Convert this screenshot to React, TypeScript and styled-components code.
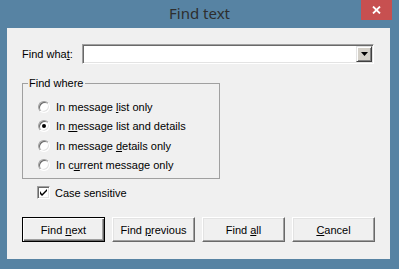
import React from "react";
import styled, { createGlobalStyle } from "styled-components";

const GlobalStyle = createGlobalStyle`
  html, body {
    margin: 0;
    padding: 0;
    background: #5783a3;
  }
  body {
    font-family: "Liberation Sans", Arial, sans-serif;
    font-size: 11px;
    color: #000;
  }
`;

const Window = styled.div`
  width: 399px;
  height: 269px;
  display: flex;
  flex-direction: column;
  background: #5783a3;
`;

const TitleBar = styled.div`
  height: 28px;
  display: grid;
  grid-template-columns: 1fr auto 1fr;
`;

const Title = styled.div`
  grid-column: 2;
  font-family: "Noto Sans", "Open Sans", sans-serif;
  font-size: 15px;
  line-height: 27px;
  color: #2e2e2e;
`;

const CloseButton = styled.div`
  grid-column: 3;
  justify-self: end;
  width: 31px;
  height: 20px;
  margin-right: 7px;
  background: #c75050;
  display: flex;
  align-items: center;
  justify-content: center;
`;

const Client = styled.div`
  flex: 1;
  margin: 0 9px 10px 7px;
  background: #f0f0f0;
  padding: 16px 16px 0 15px;
  display: flex;
  flex-direction: column;
`;

const FindRow = styled.div`
  display: flex;
  align-items: center;
  height: 20px;
`;

const Label = styled.span`
  width: 60px;
`;

const Key = styled.u`
  text-decoration: underline;
  text-underline-offset: 1px;
`;

const ComboBox = styled.div`
  flex: 1;
  height: 20px;
  box-sizing: border-box;
  background: #fff;
  border-style: solid;
  border-width: 1px;
  border-color: #a0a0a0 #fff #fff #a0a0a0;
  box-shadow: inset 1px 1px #696969, inset -1px -1px #e3e3e3;
  display: flex;
  justify-content: flex-end;
  padding: 1px;
`;

const DropButton = styled.div`
  width: 16px;
  box-sizing: border-box;
  background: #d4d0c8;
  border-style: solid;
  border-width: 1px;
  border-color: #e3e3e3 #404040 #404040 #e3e3e3;
  box-shadow: inset 1px 1px #fff, inset -1px -1px #808080;
  display: flex;
  align-items: center;
  justify-content: center;
`;

const GroupBox = styled.fieldset`
  width: 198px;
  box-sizing: border-box;
  margin: 12px 0 0 0;
  padding: 7px 0 3px 0;
  border: 1px solid #a0a0a0;
  min-width: 0;
`;

const Legend = styled.legend`
  margin-left: 5px;
  padding: 0 2px 0 1px;
  line-height: 14px;
`;

const OptionList = styled.div`
  padding-left: 15px;
`;

const OptionRow = styled.label`
  display: flex;
  align-items: center;
  gap: 6px;
  height: 19.5px;
`;

const Radio = styled.span<{ $checked?: boolean }>`
  position: relative;
  width: 12px;
  height: 12px;
  box-sizing: border-box;
  border-radius: 50%;
  background: #fff;
  border: 1px solid;
  border-color: #a0a0a0 #fff #fff #a0a0a0;
  box-shadow: inset 1px 1px #696969, inset -1px -1px #e3e3e3;
  &::after {
    content: "";
    display: ${(p) => (p.$checked ? "block" : "none")};
    position: absolute;
    left: 3px;
    top: 3px;
    width: 4px;
    height: 4px;
    border-radius: 50%;
    background: #000;
  }
`;

const CheckRow = styled.label`
  display: flex;
  align-items: center;
  gap: 5px;
  height: 19px;
  margin: 4px 0 0 15px;
`;

const CheckBox = styled.span`
  width: 13px;
  height: 13px;
  box-sizing: border-box;
  background: #fff;
  border: 1px solid;
  border-color: #a0a0a0 #fff #fff #a0a0a0;
  box-shadow: inset 1px 1px #696969, inset -1px -1px #e3e3e3;
  display: flex;
  align-items: center;
  justify-content: center;
`;

const ButtonRow = styled.div`
  display: flex;
  justify-content: space-between;
  margin-top: 15px;
  width: 353px;
`;

const Button = styled.div<{ $default?: boolean }>`
  width: 83px;
  height: 25px;
  box-sizing: border-box;
  background: #f0f0f0;
  display: flex;
  align-items: center;
  justify-content: center;
  border: 1px solid;
  border-color: ${(p) => (p.$default ? "#000" : "#fff #696969 #696969 #fff")};
  box-shadow: ${(p) =>
    p.$default
      ? "inset 1px 1px #fff, inset -1px -1px #696969, inset -2px -2px #a0a0a0"
      : "inset -1px -1px #a0a0a0, inset 1px 1px #e3e3e3"};
`;

const options = [
  { pre: "In message ", key: "l", post: "ist only", checked: false },
  { pre: "In ", key: "m", post: "essage list and details", checked: true },
  { pre: "In message ", key: "d", post: "etails only", checked: false },
  { pre: "In c", key: "u", post: "rrent message only", checked: false },
];

const buttons = [
  { pre: "Find ", key: "n", post: "ext", def: true },
  { pre: "Find ", key: "p", post: "revious", def: false },
  { pre: "Find ", key: "a", post: "ll", def: false },
  { pre: "", key: "C", post: "ancel", def: false },
];

export default function App() {
  return (
    <>
      <GlobalStyle />
      <Window>
        <TitleBar>
          <Title>Find text</Title>
          <CloseButton>
            <svg width="9" height="8" viewBox="0 0 9 8">
              <path d="M1 0.5 L8 7.5 M8 0.5 L1 7.5" stroke="#fff" strokeWidth="1.8" />
            </svg>
          </CloseButton>
        </TitleBar>
        <Client>
          <FindRow>
            <Label>
              Find wha<Key>t</Key>:
            </Label>
            <ComboBox>
              <DropButton>
                <svg width="7" height="4" viewBox="0 0 7 4">
                  <path d="M0 0 H7 L3.5 4 Z" fill="#000" />
                </svg>
              </DropButton>
            </ComboBox>
          </FindRow>
          <GroupBox>
            <Legend>Find where</Legend>
            <OptionList>
              {options.map((o, i) => (
                <OptionRow key={i}>
                  <Radio $checked={o.checked} />
                  <span>
                    {o.pre}
                    <Key>{o.key}</Key>
                    {o.post}
                  </span>
                </OptionRow>
              ))}
            </OptionList>
          </GroupBox>
          <CheckRow>
            <CheckBox>
              <svg width="7" height="7" viewBox="0 0 7 7">
                <path d="M0 2 L0 5 L2 7 L7 2 L7 0 L2 5 Z" fill="#000" />
              </svg>
            </CheckBox>
            <span>Case sensitive</span>
          </CheckRow>
          <ButtonRow>
            {buttons.map((b, i) => (
              <Button key={i} $default={b.def}>
                <span>
                  {b.pre}
                  <Key>{b.key}</Key>
                  {b.post}
                </span>
              </Button>
            ))}
          </ButtonRow>
        </Client>
      </Window>
    </>
  );
}
